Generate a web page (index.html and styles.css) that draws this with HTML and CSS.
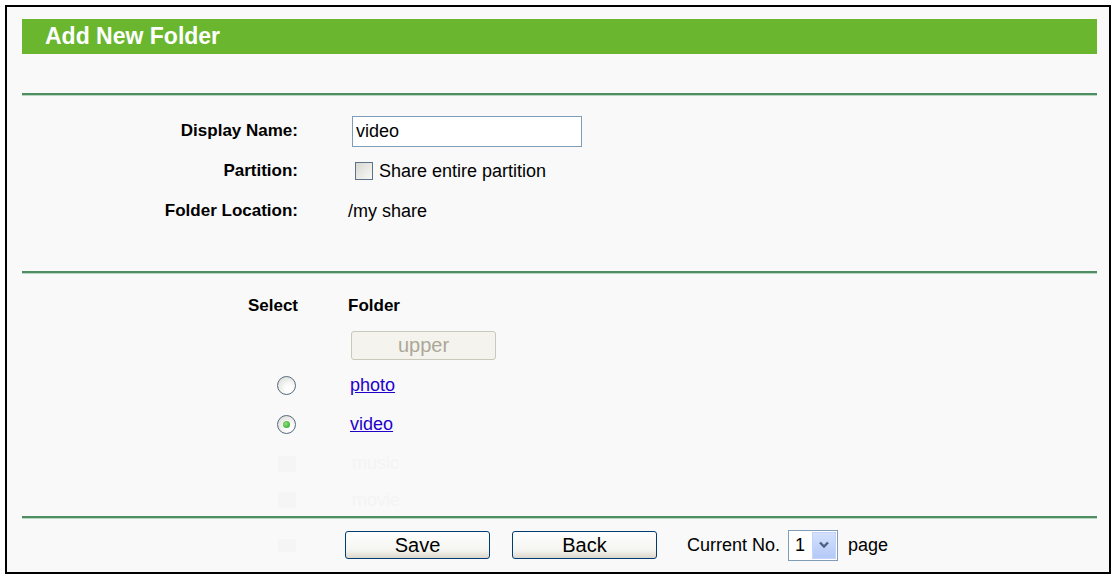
FILE: index.html
```html
<!DOCTYPE html>
<html lang="en">
<head>
    <meta charset="UTF-8">
    <title>Add New Folder</title>
    <link rel="stylesheet" href="styles.css">
</head>
<body>

    <div class="frame">
        <div class="title">Add New Folder</div>
        <div class="rule rule-top"></div>

        <!-- Share settings -->
        <div class="form">
            <label class="label" for="name">Display Name:</label>
            <div class="value"><input class="text-input" id="name" type="text" value="video"></div>

            <div class="label">Partition:</div>
            <div class="value check-line">
                <input class="check" id="whole" type="checkbox">
                <label for="whole">Share entire partition</label>
            </div>

            <div class="label">Folder Location:</div>
            <div class="value location">/my share</div>
        </div>

        <div class="rule"></div>

        <!-- Folder browser -->
        <div class="list">
            <div class="label">Select</div>
            <div class="value head">Folder</div>

            <div></div>
            <div class="value"><button class="upper-btn" disabled>upper</button></div>

            <div class="pick"><input class="radio" type="radio" name="folder"></div>
            <div class="value"><a href="#" class="folder-link">photo</a></div>

            <div class="pick"><input class="radio" type="radio" name="folder" checked></div>
            <div class="value"><a href="#" class="folder-link">video</a></div>

            <div class="pick"><span class="ghost-box"></span></div>
            <div class="value"><span class="ghost-text">music</span></div>

            <div class="pick"><span class="ghost-box"></span></div>
            <div class="value"><span class="ghost-text">movie</span></div>
        </div>

        <div class="rule"></div>

        <div class="footer">
            <div class="pick"><span class="ghost-box small"></span></div>
            <div class="actions">
                <button class="btn">Save</button>
                <button class="btn">Back</button>
                <span class="page-text current">Current No.</span>
                <div class="page-select">
                    <span class="page-num">1</span>
                    <span class="arrow">
                        <svg width="12" height="8" viewBox="0 0 12 8">
                            <path d="M2 1.5 L6 5.5 L10 1.5" fill="none" stroke="#4d6185" stroke-width="2.4"/>
                        </svg>
                    </span>
                </div>
                <span class="page-text">page</span>
            </div>
        </div>
    </div>

</body>
</html>
```

FILE: styles.css
```css
* {
    margin: 0;
    padding: 0;
    box-sizing: border-box;
}

body {
    background: #fff;
    font-family: "Liberation Sans", Arial, sans-serif;
    color: #000;
}

/* Outer black frame */
.frame {
    margin: 5px 0 0 5px;
    width: 1106px;
    height: 569px;
    border: 2px solid #000;
    background: #f9f9f9;
    padding: 12px 12px 0 15px;
}

.title {
    height: 35px;
    line-height: 35px;
    background: #6ab72f;
    color: #fff;
    font-size: 23px;
    font-weight: bold;
    padding-left: 23px;
}

.rule {
    height: 2px;
    background: #4f8e60;
    box-shadow: 0 1px 0 #b9d6c1;
}

.rule-top {
    margin-top: 39px;
}

/* Label / value grids */
.form,
.list,
.footer {
    display: grid;
    grid-template-columns: 276px 1fr;
    column-gap: 52px;
    align-items: center;
}

.form {
    grid-auto-rows: 40px;
    padding: 16px 0 40px;
}

.list {
    grid-template-rows: 38px 41px 39px 38px 41px 32px;
    padding-top: 14px;
}

.label {
    text-align: right;
    font-size: 17px;
    font-weight: bold;
}

.value {
    font-size: 18px;
    display: flex;
    align-items: center;
}

.text-input {
    margin-left: 2px;
    width: 230px;
    height: 31px;
    border: 1px solid #7f9db9;
    background: #fff;
    font-family: inherit;
    font-size: 18px;
    padding-left: 3px;
    outline: none;
}

.check-line label {
    margin-left: 6px;
}

.check {
    appearance: none;
    margin-left: 5px;
    width: 18px;
    height: 18px;
    border: 1px solid #5d7189;
    background: linear-gradient(135deg, #d8d8d2, #f8f8f6);
}

.location {
    margin-left: -2px;
}

.head {
    font-size: 17px;
    font-weight: bold;
    margin-left: -2px;
}

.upper-btn {
    margin-left: 1px;
    width: 145px;
    height: 29px;
    border: 1px solid #cac8bb;
    border-radius: 3px;
    background: #f4f3ee;
    color: #aca899;
    font-family: inherit;
    font-size: 20px;
}

.pick {
    display: flex;
    justify-content: flex-end;
    padding-right: 2px;
}

.radio {
    appearance: none;
    width: 19px;
    height: 19px;
    border-radius: 50%;
    border: 1px solid #56697f;
    background: radial-gradient(circle at 65% 70%, #fff 20%, #d9d9d3 95%);
    position: relative;
}

.radio:checked::after {
    content: "";
    position: absolute;
    left: 5px;
    top: 5px;
    width: 7px;
    height: 7px;
    border-radius: 50%;
    background: radial-gradient(circle at 40% 40%, #8fe07a, #21a121);
}

.folder-link {
    color: #2200cc;
    text-decoration: underline;
}

/* faded rows below the list */
.ghost-box {
    display: block;
    width: 18px;
    height: 16px;
    background: #f5f5f5;
}

.ghost-box.small {
    height: 13px;
}

.ghost-text {
    margin-left: 2px;
    color: #f4f4f4;
}

.footer {
    height: 54px;
    column-gap: 47px;
}

.actions {
    display: flex;
    align-items: center;
}

.btn {
    width: 145px;
    height: 28px;
    margin-right: 22px;
    border: 1px solid #003c74;
    border-radius: 3px;
    background: linear-gradient(#ffffff, #f4f4f0 70%, #dcd7cc);
    font-family: inherit;
    font-size: 20px;
    color: #000;
}

.page-text {
    font-size: 18px;
}

.current {
    margin-left: 8px;
}

.page-select {
    display: flex;
    align-items: center;
    margin: 0 10px 0 8px;
    width: 50px;
    height: 31px;
    border: 1px solid #7f9db9;
    background: #fff;
    padding: 1px;
}

.page-num {
    flex: 1;
    font-size: 18px;
    padding-left: 5px;
}

.arrow {
    width: 24px;
    height: 100%;
    display: flex;
    align-items: center;
    justify-content: center;
    background: linear-gradient(#d3e0fd, #b5c9f7);
    border: 1px solid #c3d3fd;
}
```
